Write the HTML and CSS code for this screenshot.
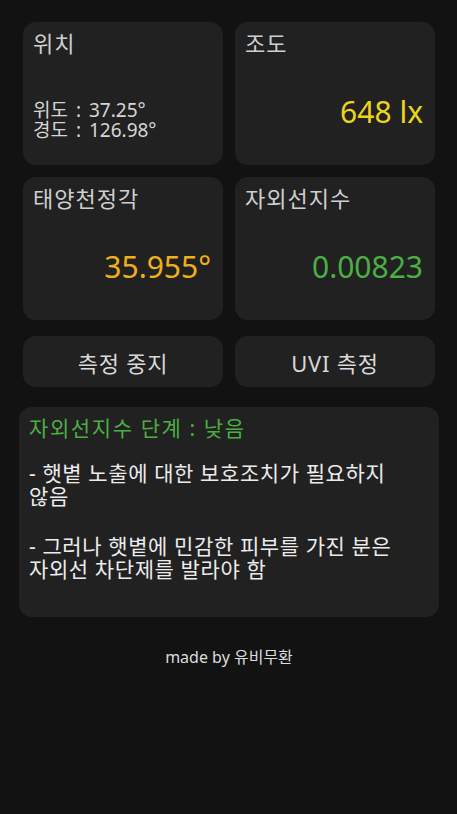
FILE: index.html
```html
<!DOCTYPE html>
<html lang="ko">
<head>
    <meta charset="UTF-8">
    <meta name="viewport" content="width=device-width, initial-scale=1.0">
    <title>UVI 측정</title>
    <link rel="stylesheet" href="styles.css">
</head>
<body>
    <div class="container">
        <div class="grid">
            <div class="card">
                <div class="card-title">위치</div>
                <div class="coords">
                    <div>위도 : 37.25°</div>
                    <div>경도 : 126.98°</div>
                </div>
            </div>
            <div class="card">
                <div class="card-title">조도</div>
                <div class="value lux">648 lx</div>
            </div>
            <div class="card">
                <div class="card-title">태양천정각</div>
                <div class="value zenith">35.955°</div>
            </div>
            <div class="card">
                <div class="card-title">자외선지수</div>
                <div class="value uvi">0.00823</div>
            </div>
        </div>

        <div class="buttons">
            <button class="btn" id="stop-button">측정 중지</button>
            <button class="btn" id="measure-button">UVI 측정</button>
        </div>

        <div class="info-box">
            <div class="info-title">자외선지수 단계 : 낮음</div>
            <p class="info-text">- 햇볕 노출에 대한 보호조치가 필요하지 않음</p>
            <p class="info-text">- 그러나 햇볕에 민감한 피부를 가진 분은 자외선 차단제를 발라야 함</p>
        </div>

        <div class="footer">made by 유비무환</div>
    </div>
</body>
</html>
```

FILE: styles.css
```css
body {
    margin: 0;
    background-color: #121212;
    font-family: "Noto Sans", "Noto Sans CJK KR", sans-serif;
    color: #dcdcdc;
}
.container {
    padding: 22px 22px 0 23px;
}
.grid {
    display: grid;
    grid-template-columns: 200px 200px;
    grid-template-rows: 143px 143px;
    gap: 12px;
}
.card {
    background-color: #212121;
    border-radius: 13px;
    padding: 6px 12px 0 10px;
    box-sizing: border-box;
}
.card-title {
    font-size: 22px;
    line-height: 30px;
    letter-spacing: 1px;
    color: #cfcfcf;
}
.coords {
    margin-top: 42px;
    font-size: 19px;
    line-height: 20px;
    word-spacing: 3px;
    color: #d6d6d6;
}
.value {
    margin-top: 34px;
    font-size: 30px;
    line-height: 40px;
    text-align: right;
}
.lux {
    color: #ecd41a;
}
.zenith {
    color: #f0b01e;
}
.uvi {
    color: #4cae44;
}
.buttons {
    display: grid;
    grid-template-columns: 200px 200px;
    gap: 12px;
    margin-top: 16px;
}
.btn {
    height: 51px;
    background-color: #212121;
    border: none;
    border-radius: 13px;
    color: #d8d8d8;
    font-family: inherit;
    font-size: 22px;
    letter-spacing: 0.8px;
    padding: 0;
}
.info-box {
    margin: 20px -4px 0 -4px;
    height: 210px;
    box-sizing: border-box;
    background-color: #212121;
    border-radius: 13px;
    padding: 6px 18px 0 10px;
    font-size: 21px;
    word-break: keep-all;
}
.info-title {
    line-height: 30px;
    letter-spacing: 1.6px;
    color: #4cae44;
}
.info-text {
    margin: 19px 0 0 0;
    line-height: 23px;
    letter-spacing: 0.6px;
    color: #ececec;
}
.info-text + .info-text {
    margin-top: 27px;
}
.footer {
    margin-top: 29px;
    text-align: center;
    font-size: 16px;
    line-height: 22px;
    color: #dcdcdc;
}
```
